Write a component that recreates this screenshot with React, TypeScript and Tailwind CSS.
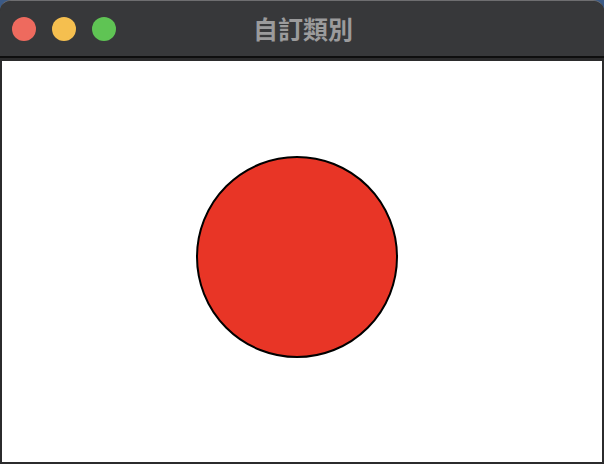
export default function App() {
  return (
    <div className="w-[604px] h-[464px] bg-[#3b5a86]">
      <div className="w-full h-full flex flex-col rounded-t-[11px] overflow-hidden bg-[#2b2b2c] border-t border-[#6e6e70]">
        <div className="relative h-[55px] shrink-0 bg-[#37383a] flex items-center px-[12px] gap-[16px]">
          <span className="w-[24px] h-[24px] rounded-full bg-[#ee6a5e]" />
          <span className="w-[24px] h-[24px] rounded-full bg-[#f5bf4f]" />
          <span className="w-[24px] h-[24px] rounded-full bg-[#5fc454]" />
          <div
            className="absolute inset-0 flex items-center justify-center pl-[2px] text-[25px] leading-none font-bold text-[#9b9b9c]"
            style={{ fontFamily: '"Noto Sans CJK TC", "Noto Sans CJK SC", sans-serif' }}
          >
            自訂類別
          </div>
        </div>
        <div className="h-[2px] shrink-0 bg-[#0e0e0e]" />
        <div className="flex-1 flex px-[2px] pt-[3px] pb-[2px]">
          <div className="flex-1 bg-white">
            <svg width="600" height="401" viewBox="0 0 600 401" className="block">
              <circle cx="295" cy="196" r="100" fill="#e83526" stroke="#000" strokeWidth="2" />
            </svg>
          </div>
        </div>
      </div>
    </div>
  );
}
